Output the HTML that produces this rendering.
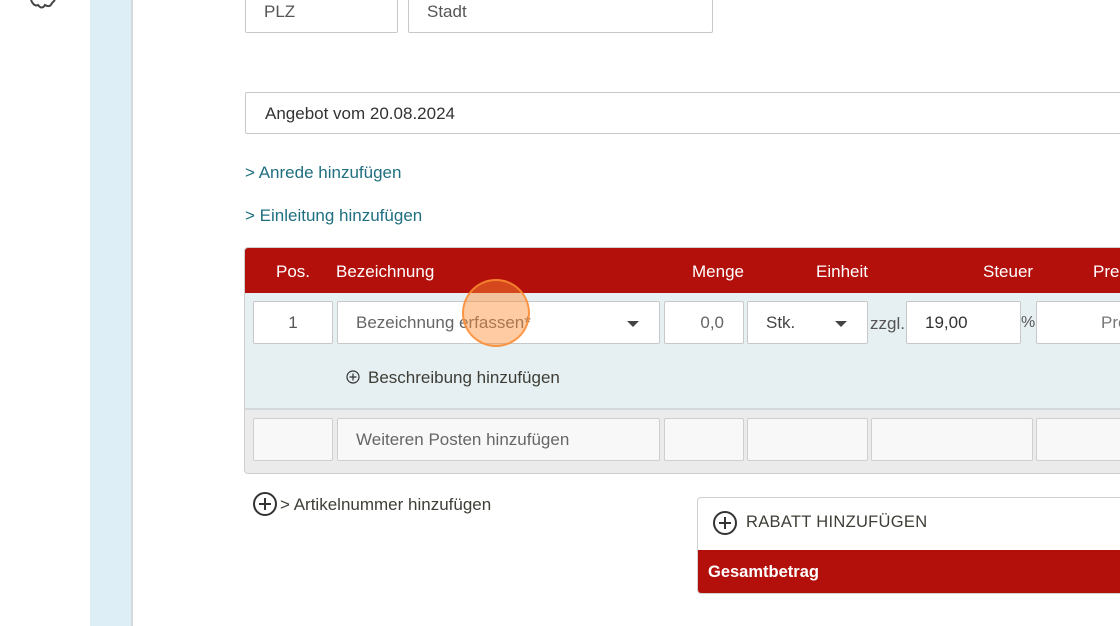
<!DOCTYPE html>
<html><head><meta charset="utf-8"><style>
*{box-sizing:border-box;margin:0;padding:0}
body{width:1120px;height:626px;overflow:hidden;background:#fff;font-family:"Liberation Sans",sans-serif;position:relative;color:#3e3e36}
.a{position:absolute}
.inp{position:absolute;background:#fff;border:1px solid #c8c8c8;border-radius:2px;font-size:17px;color:#555;display:flex;align-items:center;padding-top:1px}
.g{background:#f8f8f8;border-color:#cfcfcf}
.hd{position:absolute;top:262px;color:#fff;font-size:17px}
.lnk{position:absolute;left:245px;color:#1f6f80;font-size:17px}
.car{width:0;height:0;border-left:6px solid transparent;border-right:6px solid transparent;border-top:6px solid #444;position:absolute}
</style></head><body>
<div class="a" style="left:90px;top:0;width:43px;height:626px;background:#deeef7;border-right:2px solid #d2d8dc"></div>
<svg class="a" style="left:28px;top:0" width="34" height="12"><path d="M3 0 Q6 7 10 5 Q14 10 17 5 Q22 8 24 3 Q27 0 27 0" fill="none" stroke="#444" stroke-width="2"/></svg>
<div class="inp" style="left:245px;top:-10px;width:153px;height:43px;padding-left:18px">PLZ</div>
<div class="inp" style="left:408px;top:-10px;width:305px;height:43px;padding-left:18px">Stadt</div>
<div class="inp" style="left:245px;top:92px;width:890px;height:42px;padding-left:19px;color:#333">Angebot vom 20.08.2024</div>
<div class="lnk" style="top:163px">&gt; Anrede hinzufügen</div>
<div class="lnk" style="top:206px">&gt; Einleitung hinzufügen</div>
<div class="a" style="left:244px;top:247px;width:900px;height:227px;border:1px solid #cfcfcf;border-radius:4px;background:#ebebeb;overflow:hidden">
<div class="a" style="left:0;top:0;width:900px;height:45px;background:#b3100c"></div>
<div class="a" style="left:0;top:45px;width:900px;height:117px;background:#e6eff2;border-bottom:2px solid #d4d8da"></div>
</div>
<div class="hd" style="left:276px">Pos.</div>
<div class="hd" style="left:336px">Bezeichnung</div>
<div class="hd" style="left:692px">Menge</div>
<div class="hd" style="left:816px">Einheit</div>
<div class="hd" style="left:983px">Steuer</div>
<div class="hd" style="left:1093px">Prei</div>
<div class="inp" style="left:253px;top:301px;width:80px;height:43px;justify-content:center">1</div>
<div class="inp" style="left:337px;top:301px;width:323px;height:43px;padding-left:18px;color:#666">Bezeichnung erfassen*<div class="car" style="left:289px;top:19px"></div></div>
<div class="inp" style="left:664px;top:301px;width:80px;height:43px;justify-content:flex-end;padding-right:19px;color:#666">0,0</div>
<div class="inp" style="left:747px;top:301px;width:121px;height:43px;padding-left:18px;color:#444">Stk.<div class="car" style="left:87px;top:19px"></div></div>
<div class="a" style="left:870px;top:314px;font-size:17px;color:#555">zzgl.</div>
<div class="inp" style="left:906px;top:301px;width:115px;height:43px;padding-left:18px;color:#333">19,00</div>
<div class="a" style="left:1021px;top:314px;font-size:16px;color:#555">%</div>
<div class="inp" style="left:1036px;top:301px;width:100px;height:43px;padding-left:64px;color:#777">Pre</div>
<svg class="a" style="left:346px;top:370px" width="14" height="14"><circle cx="7" cy="7" r="6" fill="none" stroke="#333" stroke-width="1.2"/><path d="M7 3.5V10.5M3.5 7H10.5" stroke="#333" stroke-width="1.2"/></svg>
<div class="a" style="left:368px;top:368px;font-size:17px;color:#3e3e36">Beschreibung hinzufügen</div>
<div class="inp g" style="left:253px;top:418px;width:80px;height:43px"></div>
<div class="inp g" style="left:337px;top:418px;width:323px;height:43px;padding-left:18px;color:#666">Weiteren Posten hinzufügen</div>
<div class="inp g" style="left:664px;top:418px;width:80px;height:43px"></div>
<div class="inp g" style="left:747px;top:418px;width:121px;height:43px"></div>
<div class="inp g" style="left:871px;top:418px;width:162px;height:43px"></div>
<div class="inp g" style="left:1036px;top:418px;width:100px;height:43px"></div>
<svg class="a" style="left:252px;top:491px" width="26" height="26"><circle cx="13" cy="13" r="11" fill="none" stroke="#333" stroke-width="2"/><path d="M13 7V19M7 13H19" stroke="#333" stroke-width="2"/></svg>
<div class="a" style="left:280px;top:495px;font-size:17px;color:#3e3e36">&gt; Artikelnummer hinzufügen</div>
<div class="a" style="left:697px;top:497px;width:440px;height:97px;border:1px solid #d0d0d0;border-radius:4px;overflow:hidden;background:#fff">
<div class="a" style="left:0;top:52px;width:440px;height:45px;background:#b3100c"></div>
</div>
<svg class="a" style="left:712px;top:510px" width="26" height="26"><circle cx="13" cy="13" r="11" fill="none" stroke="#333" stroke-width="2"/><path d="M13 7V19M7 13H19" stroke="#333" stroke-width="2"/></svg>
<div class="a" style="left:746px;top:513px;font-size:16.5px;color:#3e3e36;letter-spacing:.3px">RABATT HINZUFÜGEN</div>
<div class="a" style="left:708px;top:563px;font-size:16.5px;color:#fff;font-weight:bold">Gesamtbetrag</div>
<div class="a" style="left:462px;top:279px;width:68px;height:68px;border-radius:50%;background:rgba(255,140,50,.45);border:2px solid rgba(250,140,50,.85)"></div>
</body></html>
